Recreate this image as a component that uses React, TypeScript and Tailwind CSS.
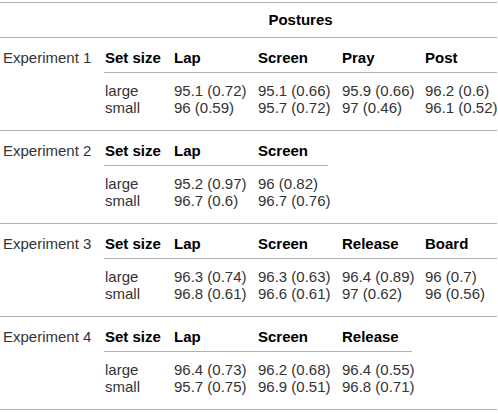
const cols = ['w-[69px]', 'w-[84px]', 'w-[84px]', 'w-[83px]', 'w-[68px]'];

interface Block {
  label: string;
  heads: string[];
  rows: string[][];
  lineWidth: string;
}

const blocks: Block[] = [
  {
    label: 'Experiment 1',
    heads: ['Set size', 'Lap', 'Screen', 'Pray', 'Post'],
    rows: [
      ['large', '95.1 (0.72)', '95.1 (0.66)', '95.9 (0.66)', '96.2 (0.6)'],
      ['small', '96 (0.59)', '95.7 (0.72)', '97 (0.46)', '96.1 (0.52)'],
    ],
    lineWidth: 'w-[393px]',
  },
  {
    label: 'Experiment 2',
    heads: ['Set size', 'Lap', 'Screen'],
    rows: [
      ['large', '95.2 (0.97)', '96 (0.82)'],
      ['small', '96.7 (0.6)', '96.7 (0.76)'],
    ],
    lineWidth: 'w-[224px]',
  },
  {
    label: 'Experiment 3',
    heads: ['Set size', 'Lap', 'Screen', 'Release', 'Board'],
    rows: [
      ['large', '96.3 (0.74)', '96.3 (0.63)', '96.4 (0.89)', '96 (0.7)'],
      ['small', '96.8 (0.61)', '96.6 (0.61)', '97 (0.62)', '96 (0.56)'],
    ],
    lineWidth: 'w-[393px]',
  },
  {
    label: 'Experiment 4',
    heads: ['Set size', 'Lap', 'Screen', 'Release'],
    rows: [
      ['large', '96.4 (0.73)', '96.2 (0.68)', '96.4 (0.55)'],
      ['small', '95.7 (0.75)', '96.9 (0.51)', '96.8 (0.71)'],
    ],
    lineWidth: 'w-[308px]',
  },
];

function ExperimentBlock({ block }: { block: Block }) {
  return (
    <div className="flex border-b border-[#b0b0b0]">
      <div className="w-[104px] shrink-0 pl-[3px] pt-[10px] leading-[20px] whitespace-nowrap text-[#333]">
        {block.label}
      </div>
      <div className="flex flex-col">
        {/* header row */}
        <div className="flex pt-[10px] pb-[4px] pl-px leading-[20px] font-bold text-black">
          {block.heads.map((h, i) => (
            <div key={h} className={`${cols[i]} shrink-0`}>
              {h}
            </div>
          ))}
        </div>
        <div className={`h-px bg-[#b0b0b0] ${block.lineWidth}`} />
        {/* data rows */}
        <div className="pt-[9px] pb-[14px] pl-px">
          {block.rows.map((row, r) => (
            <div key={r} className="flex leading-[17px] text-[#333]">
              {row.map((cell, i) => (
                <div key={i} className={`${cols[i]} shrink-0 whitespace-nowrap`}>
                  {cell}
                </div>
              ))}
            </div>
          ))}
        </div>
      </div>
    </div>
  );
}

export default function App() {
  return (
    <div className="w-[498px] h-[413px] bg-white font-['Liberation_Sans',Arial,sans-serif] text-[15px]">
      <div className="w-[497px] pt-[2px]">
        <div className="flex border-t border-b border-[#b0b0b0] h-[36px] items-center">
          <div className="w-[104px]" />
          <div className="flex-1 text-center font-bold text-black leading-[20px]">Postures</div>
        </div>
        {blocks.map((b) => (
          <ExperimentBlock key={b.label} block={b} />
        ))}
      </div>
    </div>
  );
}
